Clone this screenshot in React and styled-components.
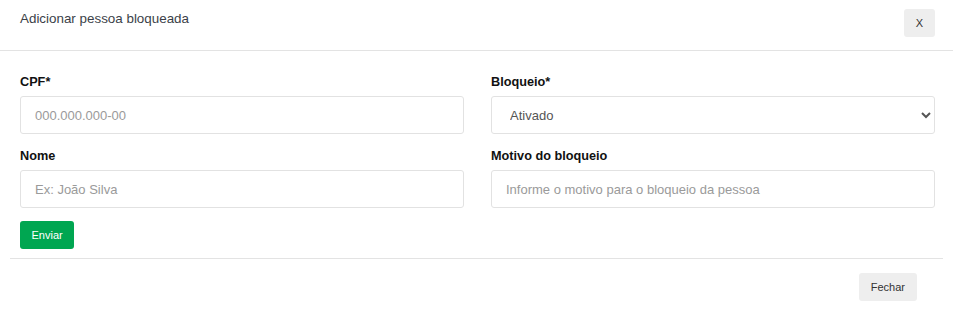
import React from "react";
import styled, { createGlobalStyle } from "styled-components";

const GlobalStyle = createGlobalStyle`
  body {
    margin: 0;
    background: #fff;
    font-family: "Liberation Sans", Arial, sans-serif;
  }
`;

const Modal = styled.div`
  width: 953px;
  background: #fff;
`;

const Header = styled.div`
  display: flex;
  justify-content: space-between;
  align-items: flex-start;
  height: 51px;
  box-sizing: border-box;
  padding: 9px 18px 0 20px;
  border-bottom: 1px solid #e3e3e3;
`;

const Title = styled.h5`
  margin: 0;
  padding-top: 1px;
  font-size: 13.4px;
  line-height: 18px;
  font-weight: 400;
  color: #3b3f48;
`;

const GreyButton = styled.button`
  height: 28px;
  padding: 0 ${(p) => p.$px || 12}px;
  border: none;
  border-radius: 3px;
  background: #eeeeee;
  color: #333;
  font-family: "Liberation Sans", Arial, sans-serif;
  font-size: 11px;
  cursor: pointer;
`;

const Body = styled.div`
  padding: 22px 18px 9px 20px;
`;

const Grid = styled.div`
  display: grid;
  grid-template-columns: 1fr 1fr;
  column-gap: 27px;
`;

const Group = styled.div`
  margin-bottom: 13px;
`;

const Label = styled.label`
  display: block;
  margin-bottom: 5px;
  font-size: 12.7px;
  line-height: 18px;
  font-weight: 700;
  color: #111;
`;

const Input = styled.input`
  display: block;
  width: 100%;
  height: 38px;
  box-sizing: border-box;
  padding: 0 14px;
  border: 1px solid #e2e2e2;
  border-radius: 3px;
  font-family: "Liberation Sans", Arial, sans-serif;
  font-size: 13px;
  color: #555;
  outline: none;
  &::placeholder {
    color: #9a9a9a;
  }
`;

const Select = styled.select`
  display: block;
  width: 100%;
  height: 38px;
  box-sizing: border-box;
  padding: 0 4px 0 14px;
  border: 1px solid #e2e2e2;
  border-radius: 3px;
  background: #fff;
  font-family: "Liberation Sans", Arial, sans-serif;
  font-size: 13px;
  color: #555;
  outline: none;
`;

const SubmitButton = styled.button`
  display: block;
  height: 28px;
  padding: 0 11.5px;
  border: none;
  border-radius: 3px;
  background: #00a651;
  color: #fff;
  font-family: "Liberation Sans", Arial, sans-serif;
  font-size: 11px;
  cursor: pointer;
`;

const Footer = styled.div`
  display: flex;
  justify-content: flex-end;
  margin: 0 10px;
  padding: 14px 26px 21px;
  border-top: 1px solid #e3e3e3;
`;

const App = () => {
  return (
    <>
      <GlobalStyle />
      <Modal>
        <Header>
          <Title>Adicionar pessoa bloqueada</Title>
          <GreyButton $px={12}>X</GreyButton>
        </Header>
        <Body>
          <Grid>
            <Group>
              <Label>CPF*</Label>
              <Input placeholder="000.000.000-00" />
            </Group>
            <Group>
              <Label>Bloqueio*</Label>
              <Select defaultValue="1">
                <option value="1">Ativado</option>
                <option value="0">Desativado</option>
              </Select>
            </Group>
            <Group>
              <Label>Nome</Label>
              <Input placeholder="Ex: João Silva" />
            </Group>
            <Group>
              <Label>Motivo do bloqueio</Label>
              <Input placeholder="Informe o motivo para o bloqueio da pessoa" />
            </Group>
          </Grid>
          <SubmitButton>Enviar</SubmitButton>
        </Body>
        <Footer>
          <GreyButton $px={12}>Fechar</GreyButton>
        </Footer>
      </Modal>
    </>
  );
};

export default App;
